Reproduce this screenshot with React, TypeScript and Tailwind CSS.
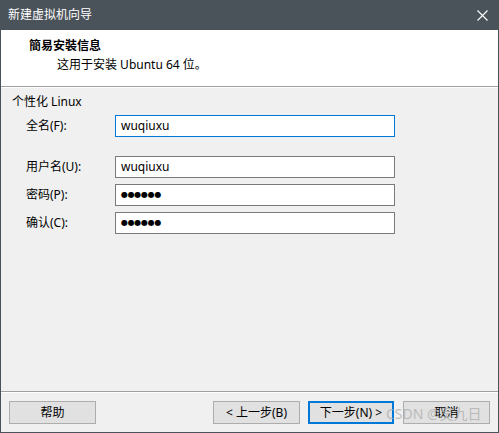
import React from 'react';

const FONT = '"Noto Sans", "Noto Sans CJK SC", sans-serif';

interface Field {
  label: string;
  value: string;
  password?: boolean;
  focused?: boolean;
}

const fields: Field[] = [
  { label: '用户名(U):', value: 'wuqiuxu' },
  { label: '密码(P):', value: '●●●●●●', password: true },
  { label: '确认(C):', value: '●●●●●●', password: true },
];

function Row({ field }: { field: Field }) {
  return (
    <div className="flex items-center h-[22px]">
      <span className="w-[114px] shrink-0 pl-[25px] text-[12px] text-black whitespace-nowrap">{field.label}</span>
      <div
        className={`w-[280px] h-[22px] shrink-0 bg-white flex items-center pl-[5px] text-[12px] text-black ${
          field.focused ? 'border border-[#0078d7]' : 'border border-[#7a7a7a]'
        }`}
      >
        {field.password ? (
          <span className="text-[8px] tracking-[-0.3px] leading-none" style={{ fontFamily: '"DejaVu Sans", sans-serif' }}>
            {field.value}
          </span>
        ) : (
          <span>{field.value}</span>
        )}
      </div>
    </div>
  );
}

function Btn({ children, primary }: { children: React.ReactNode; primary?: boolean }) {
  return (
    <div
      className={`h-[23px] flex items-center justify-center text-[12px] text-black bg-[#e1e1e1] ${
        primary ? 'w-[86px] border-2 border-[#0078d7]' : 'w-[87px] border border-[#adadad]'
      }`}
    >
      {children}
    </div>
  );
}

export default function App() {
  return (
    <div
      className="relative w-[499px] h-[433px] flex flex-col bg-[#f0f0f0] border-x border-b border-[#4b535a]"
      style={{ fontFamily: FONT }}
    >
      {/* title bar */}
      <div className="h-[30px] -mx-px bg-[#4b535a] flex items-center justify-between pl-[8px] pr-[11px]">
        <span className="text-[12px] text-white">新建虚拟机向导</span>
        <svg width="11" height="11" viewBox="0 0 11 11">
          <path d="M0.5 0.5 L10.5 10.5 M10.5 0.5 L0.5 10.5" stroke="#fff" strokeWidth="1.1" />
        </svg>
      </div>

      {/* header */}
      <div className="h-[57px] bg-white pt-[8px] pl-[28px] border-b border-[#a0a0a0]">
        <div className="h-[16px] leading-[16px] text-[12px] font-bold text-black">簡易安裝信息</div>
        <div className="h-[18px] leading-[18px] mt-[2px] pl-[28px] text-[12px] text-black">这用于安装 Ubuntu 64 位。</div>
      </div>
      <div className="h-px bg-white" />

      {/* body */}
      <div className="flex-1 pt-[6px]">
        <div className="pl-[11px] h-[16px] leading-[16px] text-[12px] text-black">个性化 Linux</div>
        <div className="mt-[5px] flex flex-col">
          <Row field={{ label: '全名(F):', value: 'wuqiuxu', focused: true }} />
          <div className="mt-[19px] flex flex-col gap-[6px]">
            {fields.map((f) => (
              <Row key={f.label} field={f} />
            ))}
          </div>
        </div>
      </div>

      {/* footer */}
      <div className="h-px bg-[#a0a0a0]" />
      <div className="h-px bg-white" />
      <div className="flex items-center pt-[8px] pb-[8px] pl-[8px] pr-[8px]">
        <Btn>帮助</Btn>
        <div className="flex-1" />
        <div className="flex items-center gap-[8px]">
          <Btn>&lt; 上一步(B)</Btn>
          <div className="mr-[1px]">
            <Btn primary>下一步(N) &gt;</Btn>
          </div>
          <Btn>取消</Btn>
        </div>
      </div>

      {/* watermark */}
      <div className="absolute left-[385px] top-[403px] text-[14px] text-[#a8a8a8]/70 whitespace-nowrap pointer-events-none">
        CSDN @吴九日
      </div>
    </div>
  );
}
